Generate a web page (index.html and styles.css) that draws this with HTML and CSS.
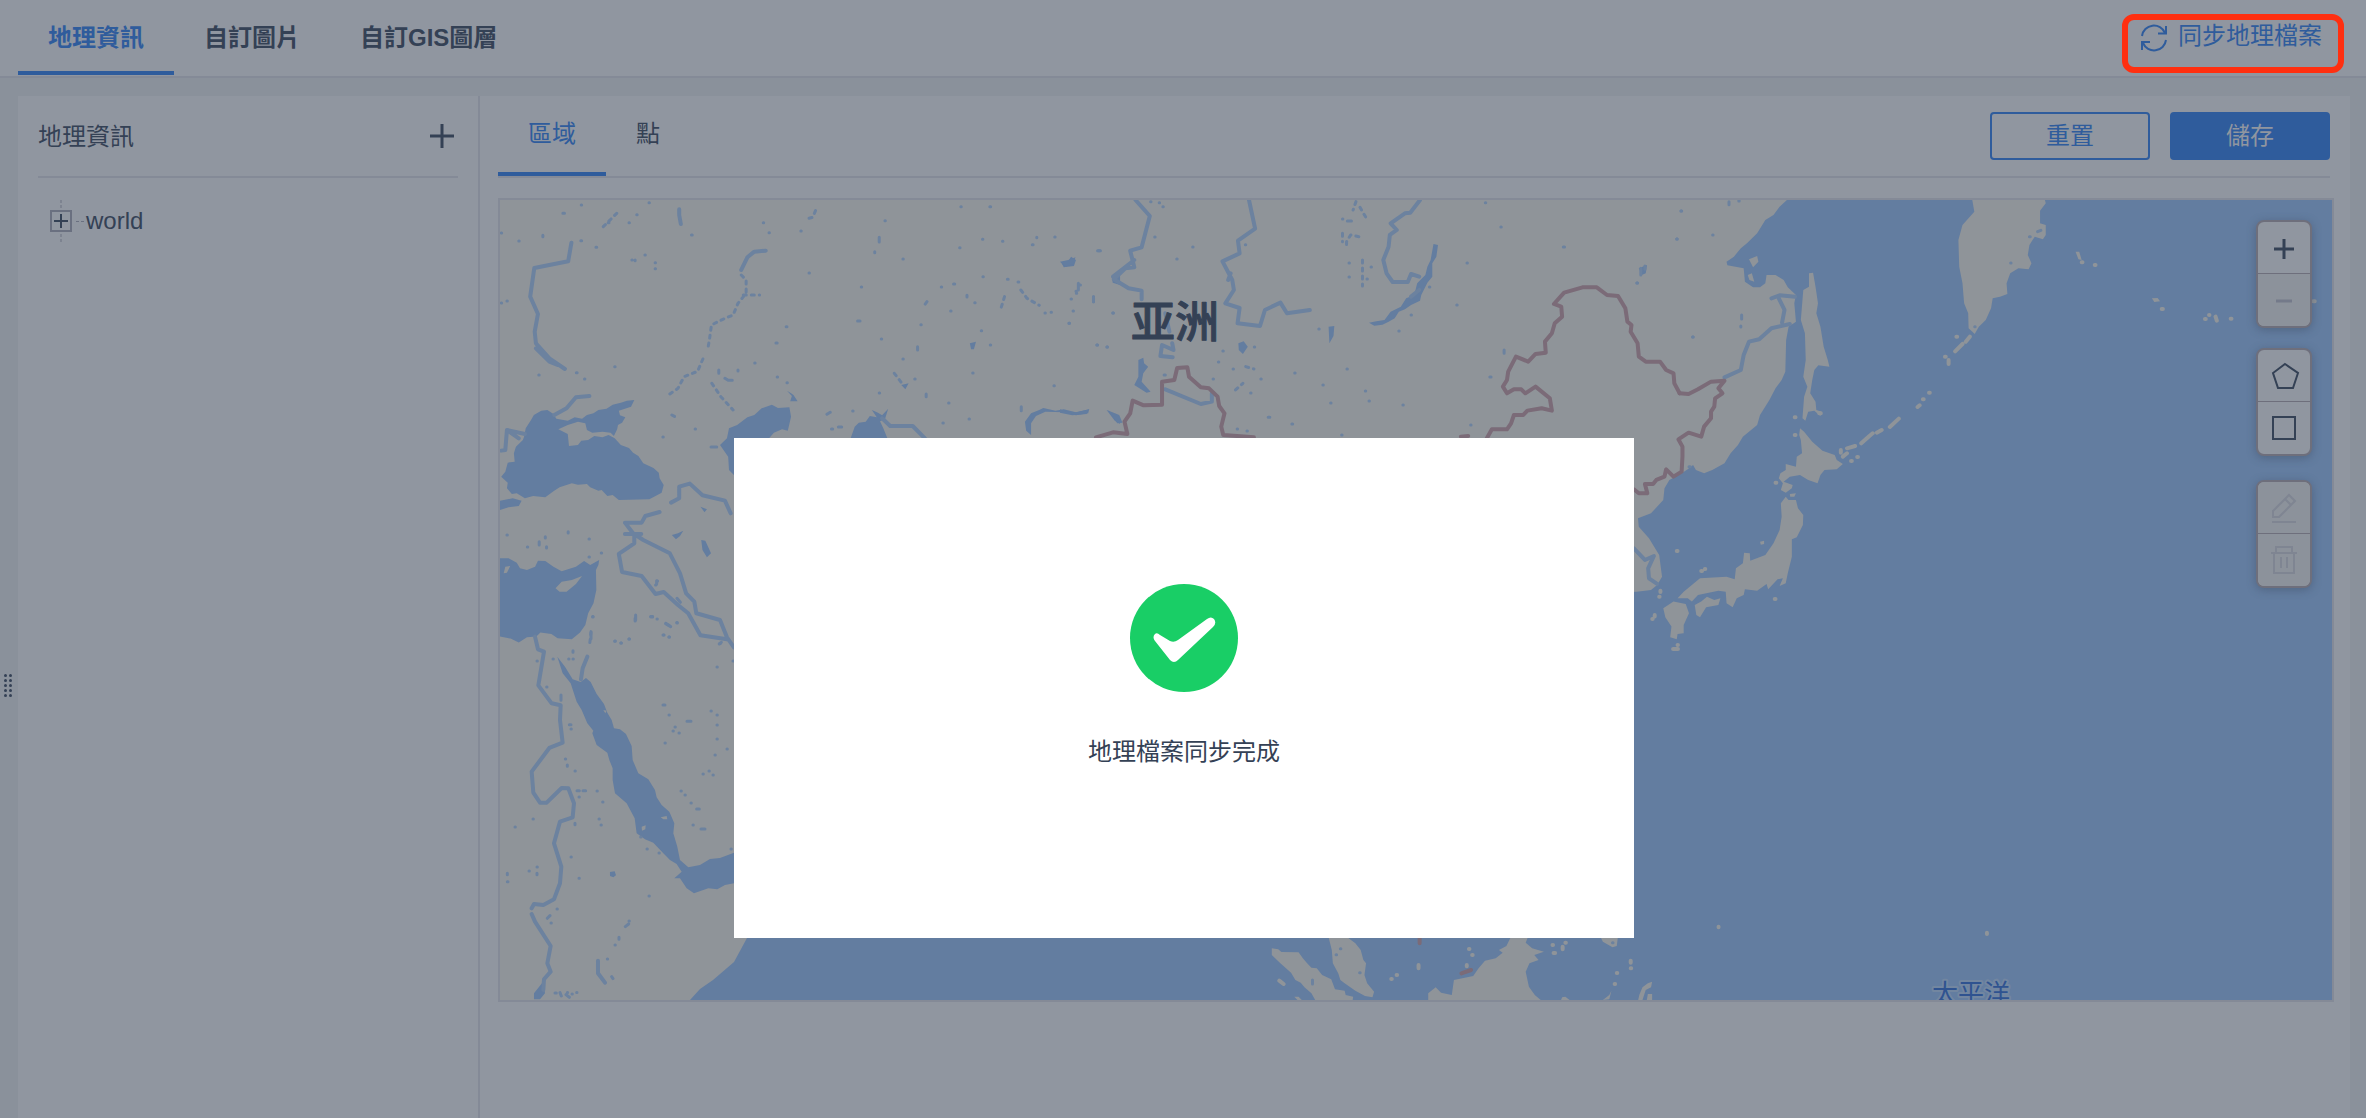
FILE: index.html
```html
<!DOCTYPE html>
<html lang="zh-Hant">
  <head>
    <meta charset="UTF-8" />
    <meta name="viewport" content="width=device-width, initial-scale=1.0" />
    <title>地理資訊</title>
    <link rel="stylesheet" href="styles.css" />
  </head>
  <body>
    <header class="topbar">
      <nav class="tabs tabs-top">
        <a class="tab active" href="#geo">地理資訊</a>
        <a class="tab" href="#image">自訂圖片</a>
        <a class="tab" href="#gis">自訂GIS圖層</a>
      </nav>
      <button class="sync-btn" type="button">
        <svg class="sync-icon" viewBox="0 0 28 28">
          <path d="M2 12A12 12 0 0 1 25 9M26 16A12 12 0 0 1 3 19" />
          <path d="M26 2V9.500H18M2 26V18H10" />
        </svg>
        同步地理檔案
      </button>
    </header>

    <main class="page">
      <div class="drag-handle">
        <i></i><i></i><i></i><i></i><i></i><i></i><i></i><i></i><i></i><i></i>
      </div>

      <aside class="sidebar">
        <div class="sidebar-head">
          <h2>地理資訊</h2>
          <button class="add-btn" type="button" aria-label="新增">
            <svg viewBox="0 0 24 24"><path d="M12 0V24M0 12H24" /></svg>
          </button>
        </div>
        <ul class="tree">
          <li>
            <button class="tree-toggle" type="button" aria-label="展開">
              <svg viewBox="0 0 22 42">
                <path class="guide" d="M11 0V8M11 34V42" />
                <rect x="1" y="11" width="20" height="20" />
                <path class="plus" d="M11 14V28M4 21H18" />
              </svg>
            </button>
            <span class="tree-line"></span>
            <span>world</span>
          </li>
        </ul>
      </aside>

      <section class="content">
        <div class="content-head">
          <nav class="tabs">
            <a class="tab active" href="#area">區域</a>
            <a class="tab" href="#point">點</a>
          </nav>
          <div class="actions">
            <button class="btn" type="button">重置</button>
            <button class="btn btn-primary" type="button">儲存</button>
          </div>
        </div>

        <div class="map">
          <svg class="map-canvas" viewBox="500 200 1832 800" preserveAspectRatio="xMinYMin slice">
            <!-- open sea -->
            <path class="sea" d="M747 938L734 962L720 974L713 980L700 989L690 1000H1700V900H747Z" />

            <!-- europe and central asia -->
            <g transform="translate(480 180) scale(.4082 .3333)">
              <path class="sea" d="M108 770L112 745L125 720L132 705L150 692L165 690L180 702L187 716L215 722L232 712L250 716L262 705L278 700L290 690L310 686L325 674L345 668L360 662L378 660L370 680L355 686L340 692L343 706L356 712L348 728L338 735L336 748L328 768L320 758L300 755L275 758L262 750L258 730L240 725L215 735L192 748L215 762L218 798L240 795L248 782L265 780L280 768L300 772L315 765L330 775L345 795L365 804L375 818L388 828L400 850L425 864L438 878L440 895L450 915L445 938L430 948L415 958L340 960L325 945L312 948L298 930L290 932L270 922L262 912L240 914L225 910L195 922L180 934L160 952L130 948L110 955L90 940L78 942L66 925L68 908L52 890L62 875L68 848L85 845L83 820L88 800L105 780Z" />
              <path class="sea" d="M49 962L80 955L102 962L95 978L70 982L49 990Z" />
              <path class="sea" d="M49 1135H70L90 1148L98 1165L115 1170L135 1160L142 1142L160 1143L180 1160L200 1174L235 1160L255 1143L270 1155L292 1140L290 1155L284 1170L285 1230L278 1270L265 1300L258 1335L245 1358L225 1378L190 1375L175 1362L148 1358L138 1370L115 1372L95 1388L75 1376L49 1370Z" />
              <path class="land" d="M185 1225L200 1205L225 1200L250 1188L235 1212L212 1235L195 1235ZM58 1180L62 1160L74 1158L66 1178Z" />
              <path class="sea" d="M622 885L610 870L608 830L588 795L605 775L610 745L630 735L655 712L672 705L690 685L715 674L730 684L758 682L762 710L754 752L740 748L720 758L708 775L700 885Z" />
              <path class="sea" d="M908 775L918 740L928 728L945 725L955 708L972 712L960 690L975 698L985 706L1000 686L992 718L980 724L988 745L998 775Z" />
              <path class="sea" d="M1335 725L1350 700L1370 690L1380 684L1410 692L1430 688L1460 697L1492 688L1490 700L1460 706L1430 697L1385 695L1362 708L1350 730L1350 765L1338 752ZM1535 690L1568 712V732L1555 722ZM1425 250L1440 245L1448 230L1460 240L1455 258L1430 262ZM752 632L762 640L768 645L778 664H760L764 648ZM542 1080L552 1082L566 1120L556 1132L545 1110ZM470 1065L485 1060L498 1052L490 1068L480 1078ZM540 980L556 988L550 997ZM1200 490L1215 485L1210 508H1203ZM1032 615L1050 610L1042 628ZM1548 290L1568 275V315L1550 308Z" />
              <path class="river" d="M224 188L216 244L133 264L123 350L142 402L134 455L137 490L170 535L208 567M137 505L170 545L190 555M52 812L62 810L66 750L95 775M66 750L110 762M182 705L212 685L235 652L268 648M985 715L1005 738H1060L1090 775M468 968L488 955V920L514 911L545 946L600 962L614 1000M440 996L405 1008L396 1028H355L375 1060L400 1080L465 1120L490 1180L505 1240L525 1265L530 1300L588 1320L605 1372L622 1402M355 1062L395 1062M378 1065V1090L340 1122L348 1176L396 1188L430 1242L450 1236L485 1275L510 1300L540 1366L605 1378M700 212L672 215L655 232L640 270M488 88V105L492 132" />
              <path class="stream" d="M640 285L652 300V340L632 370L620 405L595 418L567 435L562 480L558 507M546 537L533 574L500 590L485 625L465 642M568 610L590 650L620 690M645 345H685M335 100L302 140M822 92L815 112L795 118M1285 350L1275 390M1095 365L1085 382M1325 330L1340 355L1370 376M1015 580L1035 612M470 705L485 715M272 1355L268 1400" />
              <path class="lake" d="M203 100h4M314 128h2M284 202h2M247 182h2M380 240v2M372 240h1M404 225h1M429 248h1M429 266h1M154 166v4M95 183h1M66 363h1M144 585h1M330 560h1M236 578h2M256 597h1M248 75h1M384 104h1M365 128h1M414 68h1M518 165h2M694 128h1M708 158h1M786 153h1M806 279h1M992 122h1M978 172v14M967 215v3M1036 237h1M934 321h1M925 423h6M750 440h2M725 489h3M983 477h1M1080 434h1M1072 500v10M1036 537h1M1130 321h1M1160 312h3M1175 203h1M1178 80h1M1249 80h2M1231 178h1M1280 184h1M1364 172v1M1353 194h2M1408 171h1M1232 290h1M1292 298h2M1318 306h2M1193 346v5M1212 368h1M1153 393h1M1228 452h1M1250 495h1M1207 579h1M1093 642v8M1406 617h1M1512 495h1M1536 501h1M1550 399h1M1384 399h1M1399 397h1M1443 430h1M1503 350v15M1470 315h1M1460 334h1M1448 357h1M1515 212h5M673 549h1M632 570v3M600 595l8 6h10M585 570v10M728 591h1M752 608h1M527 747h1M448 771h1M861 747h3M878 741h8M913 693h1M850 703l8-6M566 801h14M978 639h1M1065 597h1M1148 669h1M1134 729h1M1198 717h1M1326 680v12M52 369h1M52 159h1M66 1065h1M216 1055v4M267 1077h1M297 1119h1M145 1085v10M160 1070v4M163 1100v4M116 1101h1M267 1131h1M380 1315v8M276 1310h1M418 1310h5M455 1330l8 6M482 1328h1M450 1365h1M463 1371h1M330 1384h1M345 1389h1M365 1377h1M588 1390h1M434 1203h1M430 1215h1" />
            </g>

            <!-- siberia and china -->
            <g transform="translate(1060 180) scale(.4082 .3333)">
              <path class="sea" d="M915 192L926 195L922 230L912 250L912 290L900 308L885 345L882 362L860 375L845 388L830 395L820 415L805 425L790 434L770 437L757 428L775 424L795 420L810 395L835 380L848 355L868 345L875 310L895 285L900 260L908 240Z" />
              <path class="sea" d="M437 490L450 484L460 500L448 522L438 510ZM192 540L204 533L206 550L216 560L204 580L200 605L222 635L212 638L182 615L192 590ZM0 245L20 240L38 232L32 252L12 260ZM0 688L30 700L72 688L65 702L30 706L0 698ZM115 690L145 705L153 728L140 730L128 705ZM658 440L672 438L670 468L660 490ZM1418 265L1438 255L1435 280L1425 285Z" />
              <path class="river" d="M185 60L220 108L200 202L172 212L182 262L160 265L132 298L168 325L200 332V358M182 240L130 290M463 60L478 146L436 182L440 220L398 244L422 300L426 330L405 370L440 384L435 430L490 438L502 390L540 368L556 400L612 390M418 280L412 300M882 60L858 98L845 100L810 130L825 150L808 165L805 200L792 240L800 280L815 306H852L860 282L880 290M860 350L880 330M258 628L345 672L372 665V640M275 490L278 510L250 495L246 528L276 532M258 400L268 455" />
              <path class="stream" d="M725 65L718 90M735 82L752 118M732 170L712 165L702 185V205M692 160V185M741 240V318M430 630L448 610M455 560L475 567" />
              <path class="lake" d="M222 65h1M243 68h1M252 80h1M232 171h1M286 237h1M325 201h1M454 194h1M692 117h1M704 123h10M708 249h1M708 291h1M752 297h1M762 261h1M905 321h1M860 405h1M830 453h1M997 249h1M972 375h1M1042 68h1M1080 141h1M1233 201h3M1522 93h1M1511 177h1M1550 471h1M1414 309h1M1053 591h3M1088 510v10M634 447h1M476 501h1M399 513h1M388 546h1M424 567h1M375 597h1M255 585h3M492 597h1M467 639h1M575 579h1M703 567h1M644 615h1M748 633h1M757 663h1M663 669h1M840 675h1M1006 735h1M434 747h1M458 753h1M510 712h4M568 732h2M690 765h1M90 495h1M115 501h1M130 399h1M92 212h5M45 310v20M40 340h1M82 350v15M32 393h1M22 430h1" />
              <path class="border" d="M88 772L130 757L165 762L158 725L172 700L178 662L205 676L250 674V605L280 600L287 564L312 562L316 590L345 622L365 625L386 650L390 678L403 700L395 740L400 765L475 772M982 770L1000 768M1046 774L1058 748L1095 748L1105 730L1112 705L1135 705L1145 692L1180 685L1205 692L1200 655L1165 620L1140 640L1130 628L1112 628L1095 640L1085 620L1095 600L1098 575L1117 530L1147 545L1165 522L1190 518L1188 485L1205 460L1212 430L1230 410L1228 380L1210 372L1235 338L1280 322L1315 322L1340 345L1367 348L1385 385L1390 425L1400 435L1398 455L1415 490L1418 530L1435 545L1470 545L1485 570L1503 580L1505 610L1518 640" />
            </g>

            <!-- east coast, japan and kamchatka -->
            <g transform="translate(1600 180) scale(.4082 .3333)">
              <path class="sea" d="M458 60L440 80L425 105L405 120L385 160L360 190L345 205L328 230L310 245L312 256L352 265L355 305L375 322L392 322L405 310L408 285L430 285L450 300L460 322L480 345L476 370L480 425L462 440L456 480L454 575L445 600L430 625L415 660L392 705L385 735L350 770L338 795L320 820L305 850L275 870L255 880L235 870L228 855L215 868L200 880L170 900L158 925L155 960L125 1000L93 1015L95 1040L120 1075L145 1125L152 1190L140 1215L125 1230L90 1235L0 1240V2460H1800V60Z" />
              <path class="land" d="M912 60L917 95L888 135L878 180L880 260L888 310L892 370L902 400L903 445L918 462L928 440L945 420L958 385L962 355L980 350L998 342L996 310L1005 280L1025 265L1050 268L1057 250L1048 225L1052 195L1065 170L1085 178L1092 165V135L1078 130V92L1092 70L1090 60Z" />
              <path class="land" d="M512 280L522 278L528 320L534 370L530 400L540 440L548 500L558 540L562 560L535 556L525 570L520 600L515 640L528 665L530 690L543 695L540 708L525 692L510 695L503 722L496 715L500 650L508 620L498 590L504 540L502 460L492 420L498 330L512 320Z" />
              <path class="land" d="M490 745L500 755L520 785L545 812L575 825L580 840L595 852L580 868L550 870L540 885L533 910L510 900L490 885L465 890L450 905L472 915L470 925L455 938L443 930L448 910L438 895L442 880L455 870V852L480 860L482 830L495 820L492 780L488 765Z" />
              <path class="land" d="M455 950L462 960H480L485 985L498 1005L497 1035L482 1072L470 1078V1130L460 1180L455 1210L440 1218L448 1195L435 1198L412 1228L408 1212L385 1232L355 1228L352 1245L335 1255L325 1282L310 1270L308 1235L290 1232L240 1245L225 1265L215 1255L190 1255L205 1235L225 1215L245 1195L310 1190L330 1198L333 1165L350 1150L353 1118L367 1120L368 1142L405 1125L425 1090L440 1050L445 1010L443 970ZM465 942L480 940L476 950H466Z" />
              <path class="land" d="M232 1275L248 1265L262 1250L280 1260L295 1255L290 1275L260 1282L245 1312L236 1305ZM155 1285L180 1265L210 1272L218 1300L205 1335V1360L190 1362L188 1378L172 1372L175 1340L160 1312ZM365 238L385 228L388 245L375 262ZM1165 215H1174L1180 240L1172 238ZM1352 355L1366 354L1372 364L1358 366ZM392 1085L402 1082V1092L394 1094ZM362 285L372 280L378 305L366 300Z" />
              <path class="isle" d="M870 514L888 492M896 485L906 470M873 470h2M845 530h2M854 540v12M806 638h2M791 658h2M778 681l5-5M710 741L732 716M678 758L690 750M640 790L660 768L668 760M595 830l10-10M605 805L625 798M590 810v8M615 843h2M630 831h2M477 712h2M477 765h2M430 908h2M537 700h4M1180 247h2M1212 255h2M1376 387h3M1482 417h2M1492 405h1M1508 410l3 12M1545 416h2M1735 411h4M1747 364h4M188 1113h2M248 1173h2M257 1167h1M428 1257h2M148 1232v4M145 1250h1M134 1305v5M128 1317h1M190 1395h1M179 1407h12" />
              <path class="river" d="M305 592L345 570L352 525L365 485L390 478L420 445L465 432M420 355L440 346L478 350M438 355L452 390L446 428M83 1105L110 1140L132 1128L118 1165L120 1195L140 1212" />
              <path class="lake" d="M198 93h1M188 177h1M276 165h1M316 65v9M340 63h1M90 309h1M100 265v20M110 258v10M347 405v12M345 438v3M227 471h1M218 860h3M1006 249h1M918 440h1M1052 170h2M1072 155l8-4" />
              <path class="border" d="M195 640L217 642L240 628L272 605L305 602L290 625L300 640L282 655L280 680L272 695V715L255 740L248 770L217 758L192 778L202 800V830L200 875L180 890L162 868L158 890L138 900L130 912H110L116 940H95L83 928" />
            </g>

            <!-- red sea and the nile -->
            <g transform="translate(480 560) scale(.3333)">
              <path class="sea" d="M232 290L255 320L278 358L302 366L318 354L332 366L350 402L372 432L382 458L395 480L402 505L420 508L438 522L455 558L458 600L475 640L505 658L525 690L530 712L545 735L568 755L583 790L580 820L592 860L600 900L625 922L660 915L690 897L720 894L762 878V970L735 975L712 988L685 985L642 1000L620 985L600 955L583 955L605 935L590 912L570 900L550 880L520 848L495 838L470 820L464 775L440 730L405 700L398 660V625L388 600L382 578L350 555L337 520L340 512L322 490L305 450L290 425L272 370L248 340Z" />
              <path class="land" d="M542 772L560 768L562 778H550ZM485 800L497 796L496 808L486 812ZM370 450L380 452L376 460Z" />
              <path class="sea" d="M390 936L404 934L408 946L400 952L390 948ZM190 1265L195 1300L180 1318H162V1300Z" />
              <path class="river" d="M165 230L174 268L192 275L175 376L215 430L242 436L240 480L248 548L208 564L155 635L160 698L180 728L200 728L245 684L265 685L282 730L278 772L240 785L222 850L244 920L240 970L222 1018L190 1035L162 1032L155 1045M155 1062L165 1085L212 1158L202 1210L212 1235L192 1258L190 1290M322 290L308 325L303 358M354 1202V1240L375 1268" />
              <path class="lake" d="M338 171h1M333 218v18M467 165v15M405 243h1M423 249h1M447 237h1M513 171h5M531 177h1M558 192l14 8M591 189h1M549 225h1M567 231h1M530 62v10M279 272v5M279 297h1M266 297h1M219 297h1M171 303h1M200 381h1M243 405v16M268 494h5M273 507h1M256 597h1M262 615v4M285 633h1M291 692h7M309 692h8M297 711h1M351 693h1M368 726h1M357 777h1M363 795h1M285 790v4M159 777h1M105 801h1M273 891h1M297 955h1M147 933h1M171 921h1M171 940v4M82 940v4M82 965h2M231 1047h1M202 1075l8-8M213 1089h1M436 1100l10-8M447 1083h1M417 1132v6M405 1155h1M382 1197h1M395 1250l4 6M225 1299h4M240 1298l4 10M258 1304l10 8M262 1298h1M276 1302h1M290 1298h1M507 1008h1M501 867h1M537 879h1M482 831h1M639 795h1M663 807h12M650 747h8M633 729h1M615 705h1M603 693h1M669 642h1M687 633h1M699 645h1M705 585h1M741 567h1M711 537h1M711 495h1M711 465h1M693 453h1M711 321h1M759 303h1M549 435h6M567 465h1M579 513h1M585 501h1M597 519h1M555 549h1M621 484h12M753 867h1M591 115l10 12M718 252l6-5" />
            </g>

            <!-- indonesia -->
            <g transform="translate(1200 900) scale(.5357 .3333)">
              <path class="land" d="M134 145L146 148L152 156L184 157L192 175L200 190L208 203L218 205L228 225L245 238L252 268L270 272L272 285L286 290L285 300H215L208 280L195 262L188 248L178 240L170 218L150 190L134 165ZM240 112H275L290 130L300 150L305 180L310 190L307 225L312 250L325 275L322 292L308 288L290 272L270 250L262 240L258 220L248 190L246 150ZM580 112H612L608 128L620 145L642 155L624 165L632 180L615 190L608 215L614 260L625 285L636 300H426V280L440 262L450 278L470 285L474 240L510 228L520 205L532 182L552 175L565 158L558 150L572 138ZM748 112H780L778 138L770 142L752 125ZM176 290H184L190 300H182ZM676 292L682 290L690 300H674ZM752 300L764 285L768 272L764 298ZM820 285L826 262L836 250L844 245L842 262L832 270L826 300H818ZM836 282H844V300H834Z" />
              <path class="isle" d="M408 195v10M148 242l8 10M357 237h1M367 225h1M498 195v4M508 165h1M502 147h1M658 135h1M660 159h3M677 140v8M682 128h1M804 182v6M804 205h1M778 219h1M774 252h1M968 80v2M1469 98v4" />
              <path class="border" d="M410 114V130M488 220L506 210" />
              <path class="lake" d="M210 240v12M262 146h1M254 164h1M298 218h1M770 128h1" />
            </g>

            <text class="label-land" x="1175" y="338">亚洲</text>
            <text class="label-sea" x="1971" y="1003">太平洋</text>
          </svg>

          <div class="map-tools">
            <div class="tool-group">
              <button type="button" aria-label="放大">
                <svg viewBox="0 0 28 28"><path class="thick" d="M14 5V25M4 15H24" /></svg>
              </button>
              <button type="button" aria-label="縮小" disabled>
                <svg viewBox="0 0 28 28"><path class="minus" d="M6 15H22" /></svg>
              </button>
            </div>
            <div class="tool-group">
              <button type="button" aria-label="多邊形">
                <svg viewBox="0 0 28 28"><path d="M15 2L28 11L23 26H8L3 11Z" /></svg>
              </button>
              <button type="button" aria-label="矩形">
                <svg viewBox="0 0 28 28"><rect x="3" y="3" width="22" height="22" /></svg>
              </button>
            </div>
            <div class="tool-group">
              <button type="button" aria-label="編輯" disabled>
                <svg viewBox="0 0 28 28"><path d="M3 23V17L19 1L25 7L9 23ZM15 5L21 11M2 28H26" /></svg>
              </button>
              <button type="button" aria-label="刪除" disabled>
                <svg viewBox="0 0 28 28"><path d="M1 7H27M6 7V1H22V7M4 7V27H24V7M11 11V22M17 11V22" /></svg>
              </button>
            </div>
          </div>
        </div>
      </section>
    </main>

    <div class="overlay">
      <div class="dialog" role="dialog" aria-labelledby="dialog-msg">
        <svg class="success-icon" viewBox="0 0 108 108">
          <circle cx="54" cy="54" r="54" />
          <path d="M30 51L40 57Q44 59 48 56L77 35Q81 32 84 35Q87 39 83 43L48 76Q44 80 40 76L25 57Q22 53 25 50Q27 48 30 51Z" />
        </svg>
        <p id="dialog-msg">地理檔案同步完成</p>
      </div>
    </div>
  </body>
</html>
```
FILE: styles.css
```css
* {
  box-sizing: border-box;
}

body {
  margin: 0;
  min-height: 100vh;
  display: flex;
  flex-direction: column;
  background: #8a919b;
  color: #344155;
  font-family: "Liberation Sans", "Noto Sans CJK TC", sans-serif;
  font-size: 24px;
  line-height: 36px;
}

button {
  font: inherit;
  color: inherit;
  background: none;
  border: none;
  padding: 0;
  cursor: pointer;
}

svg {
  display: block;
  fill: none;
  stroke: currentColor;
  stroke-width: 2;
}

/* top bar */
.topbar {
  display: flex;
  justify-content: space-between;
  align-items: flex-start;
  height: 78px;
  padding: 0 22px 0 18px;
  background: #9096a0;
  border-bottom: 2px solid #848a97;
}

.tabs {
  display: flex;
}

.tab {
  padding: 20px 30px;
  border-bottom: 4px solid transparent;
  color: inherit;
  text-decoration: none;
}

.tab.active {
  color: #2f5c9c;
  border-bottom-color: #2f5c9c;
}

.tabs-top .tab {
  padding-bottom: 15px;
  font-weight: bold;
}

.sync-btn {
  display: flex;
  align-items: flex-start;
  gap: 10px;
  height: 59px;
  margin-top: 14px;
  padding: 4px 16px 0 12px;
  border: 6px solid #ff2f10;
  border-radius: 12px;
  color: #2f5c9c;
  line-height: 24px;
}

.sync-icon {
  width: 28px;
  height: 28px;
}

/* page */
.page {
  flex: 1;
  display: flex;
  padding: 18px 16px 0 0;
}

.drag-handle {
  flex: none;
  align-self: center;
  display: grid;
  grid-template-columns: 3px 3px;
  gap: 2px;
  width: 18px;
  padding-left: 4px;
  margin-top: 156px;
}

.drag-handle i {
  height: 3px;
  border-radius: 50%;
  background: #344155;
}

.sidebar {
  flex: none;
  width: 462px;
  padding: 0 20px;
  background: #9096a0;
  border-right: 2px solid #848a97;
}

.sidebar-head {
  display: flex;
  justify-content: space-between;
  align-items: center;
  height: 82px;
  padding-right: 4px;
  border-bottom: 2px solid #848a97;
}

.sidebar-head h2 {
  margin: 0;
  padding-top: 2px;
  font-size: 24px;
  font-weight: normal;
}

.add-btn svg {
  width: 24px;
  height: 24px;
  stroke-width: 3;
}

.tree {
  list-style: none;
  margin: 22px 0 0;
  padding: 0 0 0 12px;
}

.tree li {
  display: flex;
  align-items: center;
}

.tree-toggle svg {
  width: 22px;
  height: 42px;
}

.tree-toggle rect {
  stroke: #6a7080;
  stroke-width: 2;
}

.tree-toggle .guide {
  stroke: #6a7080;
  stroke-width: 1;
  stroke-dasharray: 3 2;
}

.tree-line {
  width: 8px;
  margin: 0 2px 0 4px;
  border-top: 1px dashed #6a7080;
}

/* content */
.content {
  flex: 1;
  min-width: 0;
  padding: 0 16px 0 18px;
  background: #9096a0;
}

.content-head {
  display: flex;
  justify-content: space-between;
  align-items: flex-end;
  height: 82px;
  margin-right: 4px;
  border-bottom: 2px solid #848a97;
}

.actions {
  display: flex;
  gap: 20px;
  padding-bottom: 16px;
}

.btn {
  width: 160px;
  height: 48px;
  border: 2px solid #2f5c9c;
  border-radius: 4px;
  color: #2f5c9c;
}

.btn-primary {
  background: #2f5c9c;
  color: #9096a0;
}

/* map */
.map {
  position: relative;
  margin-top: 20px;
  border: 2px solid #848a97;
  background: #8f9499;
}

.map-canvas {
  width: 100%;
  height: 800px;
}

.map-canvas path {
  stroke: none;
  stroke-linejoin: round;
  stroke-linecap: round;
  vector-effect: non-scaling-stroke;
}

.map-canvas .sea {
  fill: #637da0;
}

.map-canvas .land {
  fill: #8f9499;
}

.map-canvas .river {
  stroke: #6c829f;
  stroke-width: 4;
}

.map-canvas .stream {
  stroke: #6c829f;
  stroke-width: 3;
  stroke-dasharray: 3 5;
}

.map-canvas .lake {
  stroke: #6c829f;
  stroke-width: 3;
}

.map-canvas .isle {
  stroke: #8f9499;
  stroke-width: 4;
}

.map-canvas .border {
  stroke: #7b6b78;
  stroke-width: 4;
}

.label-land,
.label-sea {
  font-family: "Noto Sans CJK SC", sans-serif;
  text-anchor: middle;
  stroke-linejoin: round;
  paint-order: stroke;
}

.label-land {
  font-size: 44px;
  font-weight: 500;
  fill: #344155;
  stroke: #344155;
  stroke-width: 1;
}

.label-sea {
  font-size: 26px;
  fill: #2f5390;
  stroke: #7286a0;
  stroke-width: 4;
}

.map-tools {
  position: absolute;
  top: 20px;
  right: 20px;
  display: flex;
  flex-direction: column;
  gap: 20px;
}

.tool-group {
  width: 56px;
  border: 2px solid #6e6f7c;
  border-radius: 8px;
  background: #9096a0;
  box-shadow: 0 2px 10px rgba(52, 65, 85, 0.4);
  overflow: hidden;
}

.tool-group:last-child {
  margin-top: 4px;
}

.tool-group button {
  display: flex;
  align-items: center;
  justify-content: center;
  width: 100%;
  height: 51px;
}

.tool-group button + button {
  height: 53px;
  border-top: 1px solid #6e6f7c;
}

.tool-group button:disabled {
  background: #8c929b;
  color: #7f8592;
  cursor: default;
}

.tool-group svg {
  width: 28px;
  height: 28px;
  overflow: visible;
}

.tool-group .thick {
  stroke-width: 3;
}

.tool-group .minus {
  stroke: #747a8a;
  stroke-width: 3;
}

/* result dialog */
.overlay {
  position: fixed;
  inset: 0;
  display: flex;
  justify-content: center;
  align-items: flex-start;
  padding: 438px 0 0 2px;
}

.dialog {
  display: flex;
  flex-direction: column;
  align-items: center;
  width: 900px;
  height: 500px;
  padding-top: 146px;
  background: #fff;
}

.success-icon {
  width: 108px;
  height: 108px;
  stroke: none;
}

.success-icon circle {
  fill: #19ce66;
}

.success-icon path {
  fill: #fff;
}

.dialog p {
  margin: 42px 0 0;
}
```
